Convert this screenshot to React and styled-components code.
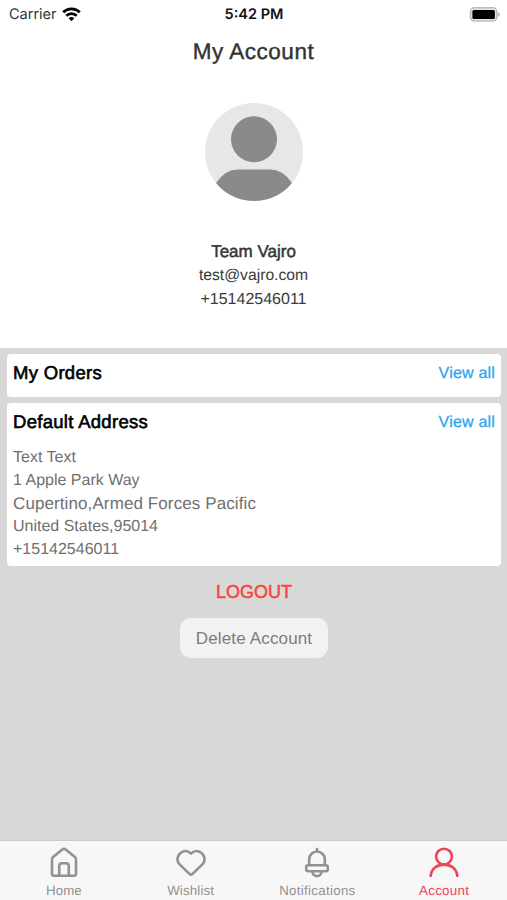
import React from 'react';
import styled, { createGlobalStyle } from 'styled-components';

const GlobalStyle = createGlobalStyle`
  * {
    box-sizing: border-box;
  }
  body {
    margin: 0;
    background: #d8d8d8;
    font-family: "Liberation Sans", Arial, sans-serif;
    text-rendering: geometricPrecision;
  }
`;

const Screen = styled.div`
  display: flex;
  flex-direction: column;
  width: 100%;
  height: 900px;
  overflow: hidden;
`;

const StatusBar = styled.div`
  display: grid;
  grid-template-columns: 1fr auto 1fr;
  align-items: center;
  height: 28px;
  padding: 0 7px 0 9px;
  font-family: Inter, sans-serif;
  font-size: 14px;
  line-height: 28px;
  color: #111;
`;

const Carrier = styled.div`
  display: flex;
  align-items: center;
  gap: 5px;
  padding-top: 1px;
  font-size: 14.5px;
  color: #333;
  svg {
    margin-bottom: 2px;
  }
`;

const Time = styled.div`
  padding: 1px 1px 0 0;
  font-size: 14.5px;
  font-weight: 600;
`;

const Battery = styled.div`
  display: flex;
  justify-content: flex-end;
`;

const Header = styled.header`
  display: flex;
  flex-direction: column;
  align-items: center;
  height: 348px;
  background: #fff;
  ${StatusBar} {
    align-self: stretch;
  }
`;

const Title = styled.h1`
  margin: 9px 0 0;
  font-size: 22.5px;
  font-weight: 400;
  line-height: 30px;
  letter-spacing: 0.5px;
  color: #333;
  -webkit-text-stroke: 0.4px #333;
`;

const Avatar = styled.svg`
  margin-top: 36px;
`;

const UserInfo = styled.div`
  display: flex;
  flex-direction: column;
  align-items: center;
  margin-top: 39px;
`;

const UserLine = styled.div`
  font-size: ${(p) => p.$size}px;
  line-height: 24px;
  letter-spacing: ${(p) => p.$spacing || 0}px;
  color: #3a3a3a;
  -webkit-text-stroke: ${(p) => (p.$bold ? '0.5px #333' : '0')};
`;

const Content = styled.main`
  flex: 1;
  display: flex;
  flex-direction: column;
  align-items: center;
  padding: 6px 6px 0 7px;
  background: #d8d8d8;
`;

const Card = styled.section`
  width: 100%;
  height: ${(p) => p.$height}px;
  margin-bottom: 6px;
  padding: 7px 6px 0;
  border-radius: 4px;
  background: #fff;
`;

const CardHead = styled.div`
  display: flex;
  align-items: center;
  justify-content: space-between;
  height: 25px;
`;

const CardTitle = styled.h2`
  margin: 0;
  padding-bottom: 2px;
  font-size: 18.5px;
  font-weight: 400;
  letter-spacing: 0.3px;
  color: #000;
  -webkit-text-stroke: 0.6px #000;
`;

const ViewAll = styled.a`
  padding-top: 1px;
  font-size: 16px;
  letter-spacing: 0.2px;
  color: #26a5ee;
  -webkit-text-stroke: 0.25px #26a5ee;
`;

const Address = styled.div`
  padding-top: 11px;
`;

const AddressLine = styled.div`
  font-size: ${(p) => p.$size}px;
  line-height: 23px;
  letter-spacing: ${(p) => p.$spacing || 0}px;
  color: #6f6f6f;
  white-space: nowrap;
`;

const Logout = styled.button`
  margin-top: 6px;
  padding: 0;
  border: 0;
  background: none;
  font-family: inherit;
  font-size: 18px;
  line-height: 29px;
  color: #f8453a;
  -webkit-text-stroke: 0.5px #f8453a;
`;

const DeleteButton = styled.button`
  width: 148px;
  height: 40px;
  margin-top: 11px;
  padding: 1px 0 0;
  border: 0;
  border-radius: 11px;
  background: #f2f2f2;
  font-family: inherit;
  font-size: 17px;
  letter-spacing: 0.15px;
  color: #7d7d7d;
`;

const TabBar = styled.nav`
  display: grid;
  grid-template-columns: repeat(4, 1fr);
  height: 60px;
  border-top: 1px solid #cbcbcb;
  background: #f7f7f7;
`;

const Tab = styled.div`
  display: flex;
  flex-direction: column;
  align-items: center;
  padding: 5px 0 0 1px;
  font-size: 13.3px;
  line-height: 16px;
  letter-spacing: ${(p) => p.$spacing}px;
  color: ${(p) => (p.$active ? '#ee4458' : '#929292')};
  svg {
    margin-bottom: 5px;
  }
`;

const icons = {
  home: (
    <>
      <path d="M3 13.200a3 3 0 0 1 1.100-2.300L13.300 3.600a2.600 2.600 0 0 1 3.400 0L25.900 10.900a3 3 0 0 1 1.100 2.300V27.500a2.300 2.300 0 0 1-2.300 2.300H5.300A2.300 2.300 0 0 1 3 27.500z" />
      <path d="M10.200 29.500V20a2.800 2.800 0 0 1 2.800-2.800h4a2.800 2.800 0 0 1 2.800 2.800v9.500" />
    </>
  ),
  heart: <path d="M15 7.600C12.200 4.600 8.100 4.100 4.800 6.700C.6 10.200 .4 15.200 3.900 18.600L13.700 28.100a1.800 1.800 0 0 0 2.600 0L26.100 18.600C29.600 15.200 29.400 10.200 25.200 6.700C21.900 4.100 17.800 4.600 15 7.600z" />,
  bell: (
    <>
      <path d="M15 3v2.500M7.200 19v-5.700a7.800 7.800 0 0 1 15.600 0v5.700" />
      <rect x="4.200" y="19.300" width="21.600" height="5.900" rx="2" />
      <path d="M10.500 25.600a4.500 4.500 0 0 0 9 0" />
    </>
  ),
  user: (
    <>
      <circle cx="15" cy="10.600" r="7.900" />
      <path d="M1.700 29.800c.7-6.900 6.200-11.200 13.300-11.200s12.600 4.300 13.300 11.200" />
    </>
  ),
};

const tabs = [
  { label: 'Home', icon: 'home', spacing: 0.1 },
  { label: 'Wishlist', icon: 'heart', spacing: 0.15 },
  { label: 'Notifications', icon: 'bell', spacing: 0.3 },
  { label: 'Account', icon: 'user', spacing: 0.3, active: true },
];

const addressLines = [
  { text: 'Text Text', size: 16 },
  { text: '1 Apple Park Way', size: 16 },
  { text: 'Cupertino,Armed Forces Pacific', size: 17, spacing: 0.1 },
  { text: 'United States,95014', size: 16 },
  { text: '+15142546011', size: 16 },
];

const App = () => {
  return (
    <Screen>
      <GlobalStyle />
      <Header>
        <StatusBar>
          <Carrier>
            Carrier
            <svg width="19" height="15" viewBox="0 0 19 15" fill="none" stroke="#000" strokeWidth="2.700">
              <path d="M1.200 5.300a11.700 11.700 0 0 1 16.600 0" />
              <path d="M4.300 8.700a7.400 7.400 0 0 1 10.400 0" />
              <path d="M9.500 14.300 6.700 11.300a4.300 4.300 0 0 1 5.600 0z" fill="#000" stroke="none" />
            </svg>
          </Carrier>
          <Time>5:42 PM</Time>
          <Battery>
            <svg width="31" height="16" viewBox="0 0 31 16">
              <rect x="1.500" y=".8" width="26.300" height="13.200" rx="4" fill="#e6e6e6" stroke="#bdbdbd" strokeWidth="1.600" />
              <rect x="3.400" y="2.900" width="22.500" height="9" rx="1.500" fill="#000" />
              <path d="M28.800 5q2.100 1 2.100 2.500t-2.100 2.500z" fill="#bdbdbd" />
            </svg>
          </Battery>
        </StatusBar>
        <Title>My Account</Title>
        <Avatar width="98" height="98" viewBox="0 0 98 98">
          <clipPath id="round">
            <circle cx="49" cy="49" r="49" />
          </clipPath>
          <circle cx="49" cy="49" r="49" fill="#e7e7e7" />
          <g clipPath="url(#round)" fill="#8a8a8a">
            <circle cx="49" cy="36.300" r="23" />
            <path d="M11 80q9-13.500 22-13.500h32q13 0 22 13.500v20H11z" />
          </g>
        </Avatar>
        <UserInfo>
          <UserLine $size={17} $bold>Team Vajro</UserLine>
          <UserLine $size={15.7}>test@vajro.com</UserLine>
          <UserLine $size={16}>+15142546011</UserLine>
        </UserInfo>
      </Header>
      <Content>
        <Card $height={43}>
          <CardHead>
            <CardTitle>My Orders</CardTitle>
            <ViewAll>View all</ViewAll>
          </CardHead>
        </Card>
        <Card $height={163}>
          <CardHead>
            <CardTitle>Default Address</CardTitle>
            <ViewAll>View all</ViewAll>
          </CardHead>
          <Address>
            {addressLines.map((line) => (
              <AddressLine key={line.text} $size={line.size} $spacing={line.spacing}>
                {line.text}
              </AddressLine>
            ))}
          </Address>
        </Card>
        <Logout>LOGOUT</Logout>
        <DeleteButton>Delete Account</DeleteButton>
      </Content>
      <TabBar>
        {tabs.map((tab) => (
          <Tab key={tab.label} $active={tab.active} $spacing={tab.spacing}>
            <svg width="30" height="32" viewBox="0 0 30 32" fill="none" stroke="currentColor" strokeWidth="2.600" strokeLinecap="round" strokeLinejoin="round">
              {icons[tab.icon]}
            </svg>
            {tab.label}
          </Tab>
        ))}
      </TabBar>
    </Screen>
  );
};

export default App;
